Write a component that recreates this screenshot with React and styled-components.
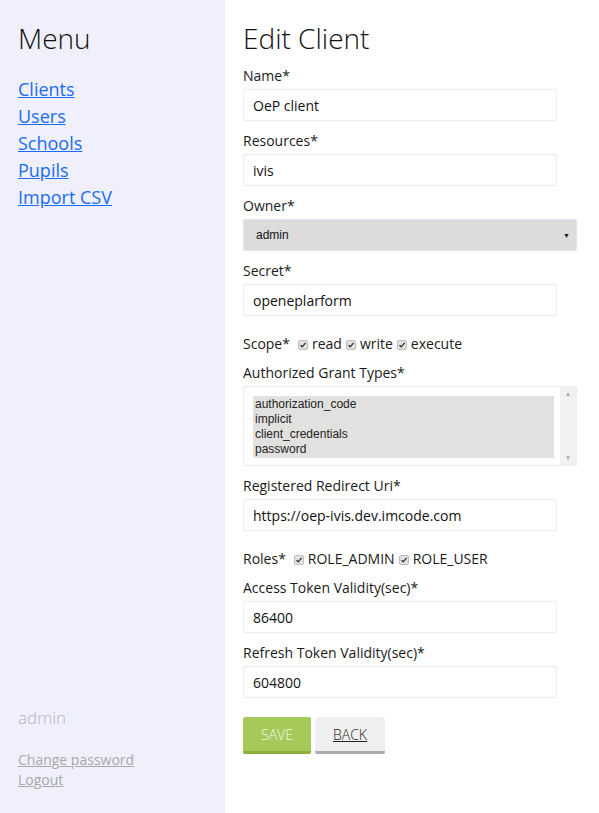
import React from 'react';
import styled, { createGlobalStyle } from 'styled-components';

const GlobalStyle = createGlobalStyle`
  html, body {
    margin: 0;
    padding: 0;
    background: #ffffff;
  }
  body {
    font-family: "Open Sans", "Noto Sans", sans-serif;
    color: #1a1a1a;
  }
`;

const menuLinks = ["Clients", "Users", "Schools", "Pupils", "Import CSV"];
const grantTypes = ["authorization_code", "implicit", "client_credentials", "password"];

const Check = () => (
  <CheckBox>
    <svg width="8" height="8" viewBox="0 0 8 8">
      <path d="M1.5 4.2 L3.2 5.8 L6.6 1.8" fill="none" stroke="#333" strokeWidth="1.3" />
    </svg>
  </CheckBox>
);

const App = () => {
  return (
    <Page>
      <GlobalStyle />
      <Sidebar>
        <MenuTitle>Menu</MenuTitle>
        <MenuList>
          {menuLinks.map((l) => (
            <MenuLink key={l} href="#">{l}</MenuLink>
          ))}
        </MenuList>
        <SideFooter>
          <UserName>admin</UserName>
          <FooterLink href="#">Change password</FooterLink>
          <FooterLink href="#">Logout</FooterLink>
        </SideFooter>
      </Sidebar>

      <Main>
        <PageTitle>Edit Client</PageTitle>

        <Field>
          <Label>Name*</Label>
          <Input defaultValue="OeP client" />
        </Field>
        <Field>
          <Label>Resources*</Label>
          <Input defaultValue="ivis" />
        </Field>
        <Field>
          <Label>Owner*</Label>
          <Select>
            <span>admin</span>
            <Arrow>▼</Arrow>
          </Select>
        </Field>
        <Field>
          <Label>Secret*</Label>
          <Input defaultValue="openeplarform" />
        </Field>

        <CheckRow>
          <RowLabel>Scope*</RowLabel>
          <Check /><span>read</span>
          <Check /><span>write</span>
          <Check /><span>execute</span>
        </CheckRow>

        <Field>
          <Label>Authorized Grant Types*</Label>
          <ListBox>
            <Options>
              {grantTypes.map((g) => (
                <Option key={g}>{g}</Option>
              ))}
            </Options>
            <ScrollBar>
              <ScrollArrow>▲</ScrollArrow>
              <ScrollArrow>▼</ScrollArrow>
            </ScrollBar>
          </ListBox>
        </Field>

        <Field>
          <Label>Registered Redirect Uri*</Label>
          <Input defaultValue="https://oep-ivis.dev.imcode.com" />
        </Field>

        <CheckRow>
          <RowLabel>Roles*</RowLabel>
          <Check /><span>ROLE_ADMIN</span>
          <Check /><span>ROLE_USER</span>
        </CheckRow>

        <Field>
          <Label>Access Token Validity(sec)*</Label>
          <Input defaultValue="86400" />
        </Field>
        <Field>
          <Label>Refresh Token Validity(sec)*</Label>
          <Input defaultValue="604800" />
        </Field>

        <Buttons>
          <Button $variant="save">SAVE</Button>
          <Button $variant="back">BACK</Button>
        </Buttons>
      </Main>
    </Page>
  );
};

export default App;

// --- Styled Components ---
const Page = styled.div`
  display: flex;
  min-height: 813px;
`;

const Sidebar = styled.aside`
  width: 225px;
  flex-shrink: 0;
  background-color: #f0f0fd;
  padding: 20px 0 23px 18px;
  box-sizing: border-box;
  display: flex;
  flex-direction: column;
`;

const MenuTitle = styled.h1`
  margin: 0;
  font-size: 28px;
  font-weight: 300;
  line-height: 36px;
  color: #111;
`;

const MenuList = styled.nav`
  display: flex;
  flex-direction: column;
  margin-top: 20px;
`;

const MenuLink = styled.a`
  font-size: 18px;
  line-height: 27px;
  color: #1a6cf2;
  text-decoration: underline;
  align-self: flex-start;
`;

const SideFooter = styled.div`
  margin-top: auto;
  display: flex;
  flex-direction: column;
`;

const UserName = styled.div`
  font-size: 17px;
  font-weight: 300;
  color: #b4b4c4;
  line-height: 24px;
  margin-bottom: 20px;
`;

const FooterLink = styled.a`
  font-size: 14px;
  line-height: 20px;
  color: #a8a8a8;
  text-decoration: underline;
  align-self: flex-start;
`;

const Main = styled.main`
  flex: 1;
  padding: 20px 22px 40px 18px;
  display: flex;
  flex-direction: column;
`;

const PageTitle = styled.h2`
  margin: 0 0 11px;
  font-size: 28px;
  font-weight: 300;
  line-height: 36px;
  color: #111;
`;

const Field = styled.div`
  display: flex;
  flex-direction: column;
  margin-bottom: 11px;
`;

const Label = styled.label`
  font-size: 14px;
  line-height: 18px;
  margin-bottom: 4px;
  color: #1a1a1a;
`;

const Input = styled.input`
  width: 314px;
  height: 32px;
  box-sizing: border-box;
  border: 1px solid #ebebf8;
  border-radius: 2px;
  padding: 0 9px;
  font-family: "Open Sans", sans-serif;
  font-size: 14px;
  color: #111;
  background: #fff;
  outline: none;
`;

const Select = styled.div`
  width: 334px;
  height: 32px;
  box-sizing: border-box;
  background: #dcdcdc;
  border: 1px solid #e4e4ee;
  border-radius: 2px;
  display: flex;
  align-items: center;
  justify-content: space-between;
  padding: 0 6px 0 12px;
  font-family: "Liberation Sans", Arial, sans-serif;
  font-size: 12px;
  color: #111;
`;

const Arrow = styled.span`
  font-size: 7px;
  color: #222;
`;

const CheckRow = styled.div`
  display: flex;
  align-items: center;
  gap: 4px;
  margin-top: 7px;
  margin-bottom: 10px;
  font-size: 14px;
  line-height: 20px;
`;

const RowLabel = styled.span`
  margin-right: 4px;
`;

const CheckBox = styled.span`
  width: 10px;
  height: 10px;
  box-sizing: border-box;
  border: 1px solid #bdbdbd;
  border-radius: 2px;
  background: #e2e2e2;
  display: inline-flex;
  align-items: center;
  justify-content: center;
  margin-top: 1px;
`;

const ListBox = styled.div`
  width: 334px;
  height: 80px;
  box-sizing: border-box;
  border: 1px solid #ebebf8;
  border-radius: 2px;
  display: flex;
  background: #fff;
`;

const Options = styled.div`
  flex: 1;
  padding: 9px 6px 0 9px;
`;

const Option = styled.div`
  background: #e3e1e0;
  font-family: "Liberation Sans", Arial, sans-serif;
  font-size: 12px;
  line-height: 15px;
  padding-left: 2px;
  color: #222;
  &:first-child { padding-top: 1px; }
  &:last-child { padding-bottom: 1px; }
`;

const ScrollBar = styled.div`
  width: 16px;
  background: #f1f1f1;
  display: flex;
  flex-direction: column;
  justify-content: space-between;
  align-items: center;
  padding: 3px 0;
`;

const ScrollArrow = styled.span`
  font-size: 6px;
  color: #a3a3a3;
`;

const Buttons = styled.div`
  display: flex;
  gap: 4px;
  margin-top: 8px;
`;

const Button = styled.button`
  height: 37px;
  border: none;
  border-radius: 2px;
  font-family: "Open Sans", sans-serif;
  font-size: 14px;
  font-weight: 300;
  padding: 0 18px;
  cursor: pointer;
  background-color: ${(p) => (p.$variant === 'save' ? '#a6ca5a' : '#efefef')};
  color: ${(p) => (p.$variant === 'save' ? '#f4fbe6' : '#222')};
  border-bottom: 3px solid ${(p) => (p.$variant === 'save' ? '#8ab03a' : '#ababab')};
  text-decoration: ${(p) => (p.$variant === 'back' ? 'underline' : 'none')};
  width: ${(p) => (p.$variant === 'save' ? '68px' : '70px')};
`;
